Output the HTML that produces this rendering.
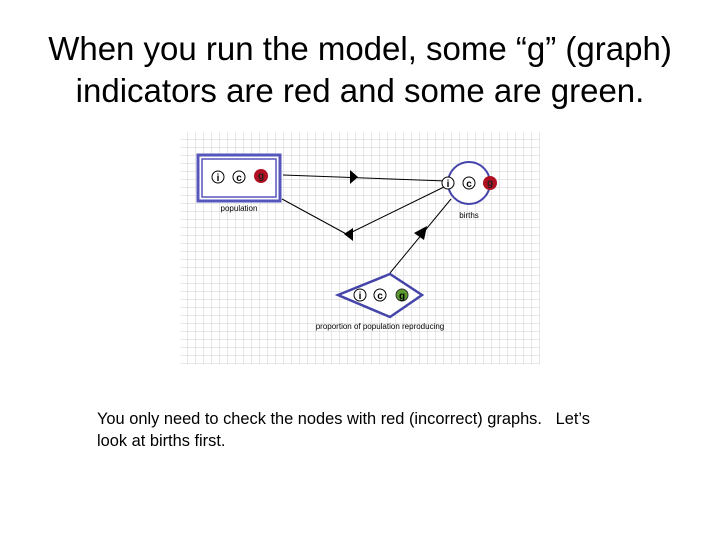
<!DOCTYPE html>
<html><head><style>
body{margin:0;width:720px;height:540px;background:#fff;position:relative;overflow:hidden;font-family:"Liberation Sans",sans-serif}
.t{position:absolute;left:0;width:720px;text-align:center;font-size:33px;color:#000;line-height:42px;top:28px;white-space:nowrap}
.b{position:absolute;left:97px;top:408px;font-size:16.4px;line-height:22px;color:#000;white-space:nowrap}
</style></head><body>
<div class="t">When you run the model, some “g” (graph)<br>indicators are red and some are green.</div>
<svg style="position:absolute;left:0;top:0" width="720" height="540">
<defs><pattern id="g" x="180" y="132" width="8" height="8" patternUnits="userSpaceOnUse"><path d="M8 0V8H0" fill="none" stroke="#cfcfcf" stroke-width="1"/></pattern></defs>
<rect x="180" y="132" width="360" height="232" fill="url(#g)"/>
<g stroke="#000" stroke-width="1" fill="none">
<line x1="283" y1="175" x2="446" y2="181"/>
<line x1="282" y1="199" x2="350" y2="236"/>
<line x1="446" y1="186" x2="350" y2="233"/>
<line x1="390" y1="273" x2="451" y2="199"/>
</g>
<polygon points="350,170 358,177 350,184" fill="#000"/>
<polygon points="344,234 353,228 353,241" fill="#000"/>
<polygon points="414,233 427,226 424,240" fill="#000"/>
<rect x="198" y="155" width="82" height="46" fill="#fff" stroke="#5555bb" stroke-width="3"/>
<rect x="202" y="159" width="74" height="38" fill="#fff" stroke="#5555bb" stroke-width="1.5"/>
<circle cx="469" cy="183" r="21" fill="#fff" stroke="#4444aa" stroke-width="2"/>
<polygon points="338,295 390,274 422,295 390,317" fill="#fff" stroke="#4444aa" stroke-width="2.5"/>
<g font-family="Liberation Sans" font-size="10" font-weight="bold" text-anchor="middle">
<circle cx="218" cy="177" r="6" fill="#fff" stroke="#000"/><text x="218" y="181">i</text>
<circle cx="239" cy="177" r="6" fill="#fff" stroke="#000"/><text x="239" y="181">c</text>
<circle cx="261" cy="176" r="7" fill="#b01020"/><text x="261" y="179" fill="#222">g</text>
<circle cx="448" cy="183" r="6" fill="#fff" stroke="#000"/><text x="448" y="187">i</text>
<circle cx="469" cy="183" r="6" fill="#fff" stroke="#000"/><text x="469" y="187">c</text>
<circle cx="490" cy="183" r="7" fill="#b01020"/><text x="490" y="186" fill="#222">g</text>
<circle cx="360" cy="295" r="6" fill="#fff" stroke="#000"/><text x="360" y="299">i</text>
<circle cx="380" cy="295" r="6" fill="#fff" stroke="#000"/><text x="380" y="299">c</text>
<circle cx="402" cy="295" r="6" fill="#5a9a30" stroke="#333"/><text x="402" y="299">g</text>
</g>
<g font-family="Liberation Sans" font-size="8" fill="#000" text-anchor="middle">
<text x="239" y="211">population</text>
<text x="469" y="218">births</text>
<text x="380" y="329">proportion of population reproducing</text>
</g>
</svg>
<div class="b">You only need to check the nodes with red (incorrect) graphs.&nbsp;&nbsp; Let’s<br>look at births first.</div>
</body></html>
